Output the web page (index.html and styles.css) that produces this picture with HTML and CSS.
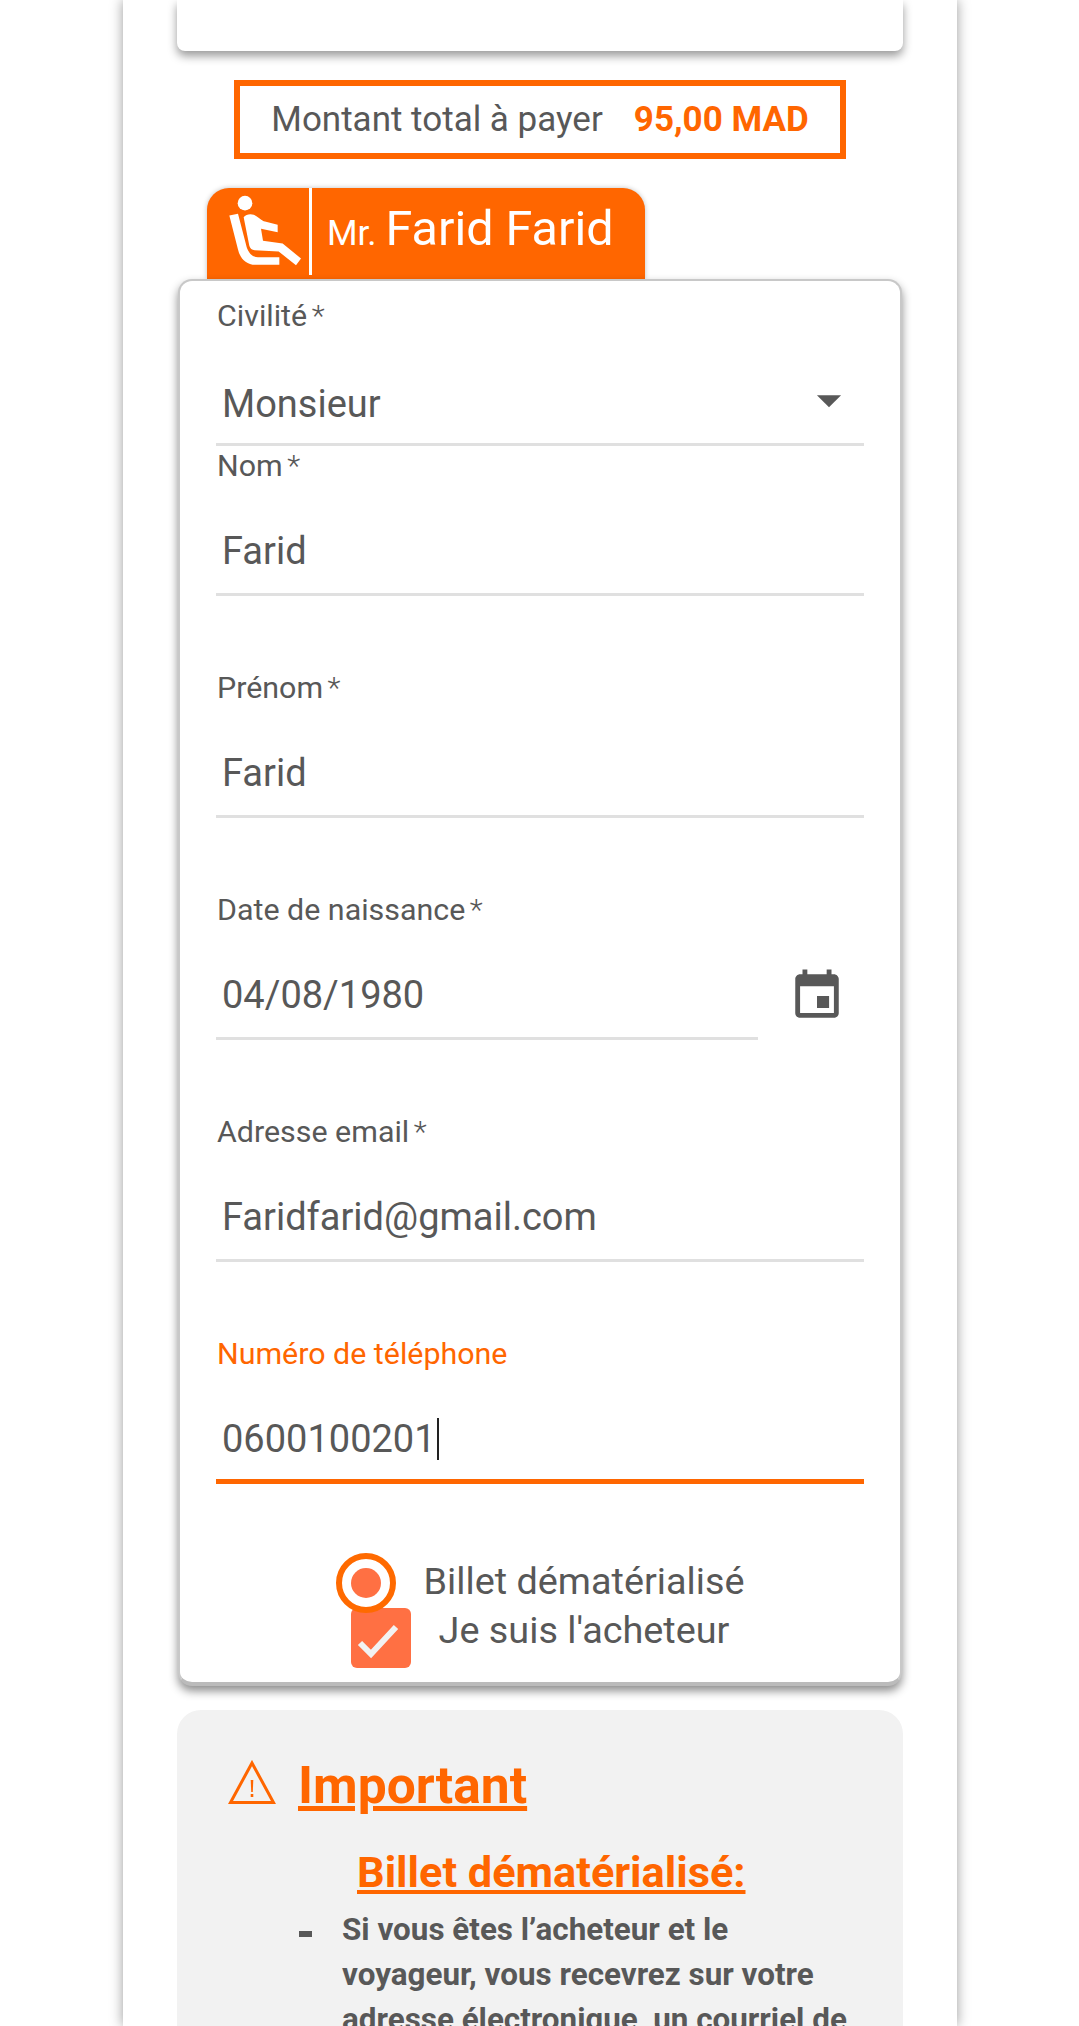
FILE: index.html
```html
<!DOCTYPE html>
<html lang="fr">
<head>
<meta charset="utf-8">
<title>Passager</title>
<link rel="stylesheet" href="styles.css">
</head>
<body>
<main class="panel">
  <div class="card-top"></div>
  <div class="total"><span class="total-label">Montant total à payer</span><strong class="total-amount">95,00 MAD</strong></div>
  <div class="tab">
    <span class="tab-icon">
      <svg class="seat" viewBox="110 70 240 230" aria-hidden="true"><circle cx="167" cy="100" r="22"/><path d="M120 137l26-5 24 92c4 18 14 38 36 38h64v23h-72c-28 0-46-20-52-46z"/><path d="M163 142c6-8 20-11 30-7 14 6 24 18 34 20l38 10v22l-50-10 6 36 59 8 55 45-15 20-52-41-72-4c-8 0-14-5-16-13z"/></svg>
    </span>
    <span class="tab-name"><small class="tab-title">Mr.</small> Farid Farid</span>
  </div>
  <form class="form-card">
    <div class="field field-first">
      <div class="label">Civilité <span class="req">*</span></div>
      <div class="input input-select"><span>Monsieur</span>
        <svg class="arrow" viewBox="0 0 24 24" aria-hidden="true"><path d="M7 10l5 5 5-5z"/></svg>
      </div>
    </div>
    <div class="field field-nom">
      <div class="label">Nom <span class="req">*</span></div>
      <div class="input"><span>Farid</span></div>
    </div>
    <div class="field">
      <div class="label">Prénom <span class="req">*</span></div>
      <div class="input"><span>Farid</span></div>
    </div>
    <div class="field field-date">
      <div class="date-main">
        <div class="label">Date de naissance <span class="req">*</span></div>
        <div class="input"><span>04/08/1980</span></div>
      </div>
      <svg class="calendar" viewBox="0 0 24 24" aria-hidden="true"><path d="M17 12h-5v5h5v-5zM16 1v2H8V1H6v2H5c-1.11 0-1.99.9-1.99 2L3 19c0 1.1.89 2 2 2h14c1.1 0 2-.9 2-2V5c0-1.1-.9-2-2-2h-1V1h-2zm3 18H5V8h14v11z"/></svg>
    </div>
    <div class="field">
      <div class="label">Adresse email <span class="req">*</span></div>
      <div class="input"><span>Faridfarid@gmail.com</span></div>
    </div>
    <div class="field field-active">
      <div class="label">Numéro de téléphone</div>
      <div class="input"><span>0600100201</span><i class="caret"></i></div>
    </div>
    <div class="option option-radio">
      <span class="radio"><span class="radio-dot"></span></span>
      <span class="option-text">Billet dématérialisé</span>
    </div>
    <div class="option option-check">
      <span class="checkbox">
        <svg class="check" viewBox="0 0 60 60" aria-hidden="true"><path d="M9 35l11 11 25-27"/></svg>
      </span>
      <span class="option-text">Je suis l'acheteur</span>
    </div>
  </form>
  <section class="notice">
    <h2 class="notice-title">
      <svg class="warn" viewBox="0 0 48 45" aria-hidden="true"><path class="warn-tri" d="M24 3L2.500 42.500h43z"/><path class="warn-bar" d="M22.700 20h2.600l-.5 12h-1.600z"/><rect class="warn-bar" x="22.700" y="34" width="2.600" height="3"/></svg>
      <span class="notice-word">Important</span>
    </h2>
    <h3 class="notice-sub">Billet dématérialisé:</h3>
    <ul class="notice-list">
      <li>Si vous êtes l’acheteur et le voyageur, vous recevrez sur votre adresse électronique, un courriel de</li>
    </ul>
  </section>
</main>
</body>
</html>
```
FILE: styles.css
```css
* { box-sizing: border-box; }
html, body { margin: 0; height: 2026px; overflow: hidden; background: #fff; }
body { font-family: Roboto, "Liberation Sans", sans-serif; color: #585858; }
.panel { width: 834px; margin-left: 123px; height: 2026px; padding: 0 54px; box-shadow: 0 0 12px rgba(0,0,0,.4); }
.card-top { height: 51px; background: #fff; border-radius: 0 0 8px 8px; box-shadow: 0 5px 10px rgba(0,0,0,.4); }
.total { width: 612px; height: 79px; margin: 29px auto 0; border: 6px solid #ff6600; padding-bottom: 1px; display: flex; align-items: center; justify-content: center; gap: 31px; font-size: 35px; }
.total-amount { color: #ff6600; font-weight: 700; }
.tab { margin: 29px 0 0 30px; width: 438px; height: 91px; background: #ff6600; border-radius: 22px 22px 0 0; display: flex; color: #fff; box-shadow: 0 0 5px rgba(0,0,0,.25); }
.tab-icon { width: 105px; height: 87px; border-right: 3px solid #fff; display: flex; align-items: center; padding-left: 19px; }
.seat { width: 80px; height: 77px; fill: #fff; }
.tab-name { padding: 11px 0 0 15px; font-size: 48.500px; line-height: 60px; white-space: nowrap; }
.tab-title { font-size: 35px; margin-right: -3px; }
.form-card { position: relative; margin: 0 1px; height: 1407px; padding: 16px 36px 0; background: #fff; border: 2px solid #c8c8c8; border-bottom: 4px solid #bbb; border-radius: 14px; box-shadow: 0 5px 10px rgba(0,0,0,.45); }
.field { margin-top: 73px; }
.field-first { margin-top: 0; }
.field-nom { margin-top: 1px; }
.label { height: 36px; line-height: 38px; font-size: 30.400px; padding-left: 1px; white-space: nowrap; }
.req { margin-left: -3px; font-weight: 300; }
.input { height: 113px; padding: 43px 0 17px 6px; border-bottom: 3px solid #e0e0e0; font-size: 38px; line-height: 50px; display: flex; align-items: center; }
.input-select { padding-top: 46px; padding-bottom: 14px; justify-content: space-between; }
.arrow { width: 58px; height: 58px; fill: #585858; margin-right: 6px; margin-top: -8px; }
.field-date { display: flex; align-items: flex-start; }
.date-main { width: 542px; }
.calendar { width: 58px; height: 58px; fill: #585858; margin: 76px 0 0 30px; }
.field-active .label { color: #ff6600; }
.field-active .input { border-bottom: 5px solid #ff6600; padding-bottom: 15px; }
.caret { width: 2px; height: 42px; margin-left: 1px; background: #222; }
.option { display: flex; justify-content: center; align-items: flex-start; gap: 28px; font-size: 37.800px; line-height: 50px; }
.option-radio { position: relative; z-index: 1; margin-top: 69px; }
.option-radio .option-text { padding-top: 3px; }
.option-check { margin-top: -5px; }
.option-check .option-text { margin-top: -3px; }
.radio { width: 60px; height: 60px; border: 6px solid #ff6a00; border-radius: 50%; display: flex; align-items: center; justify-content: center; flex: none; }
.radio-dot { width: 30px; height: 30px; background: #ff7043; border-radius: 50%; }
.checkbox { width: 60px; height: 60px; background: #ff7043; border-radius: 6px; flex: none; }
.check { display: block; width: 60px; height: 60px; fill: none; stroke: #f2f2f2; stroke-width: 6; }
.notice { margin-top: 24px; height: 600px; padding: 48px 30px 0 51px; background: #f2f2f2; border-radius: 24px; color: #ff6600; }
.notice-title { margin: 0; display: flex; align-items: center; gap: 22px; font-size: 51.500px; line-height: 56px; font-weight: 700; }
.warn { width: 48px; height: 45px; flex: none; margin-top: -8px; }
.warn-tri { fill: none; stroke: #ff6600; stroke-width: 3; }
.warn-bar { fill: #ff6600; }
.notice-word { text-decoration: underline; }
.notice-sub { margin: 34px 0 0; padding-left: 129px; font-size: 43.300px; line-height: 50px; font-weight: 700; text-decoration: underline; white-space: nowrap; }
.notice-list { margin: 9px 0 0; padding: 0 0 0 114px; list-style: none; color: #585858; font-size: 31.400px; line-height: 45px; font-weight: 700; }
.notice-list li { position: relative; max-width: 514px; }
.notice-list li::before { content: ""; position: absolute; left: -43px; top: 24px; width: 13px; height: 6px; background: #585858; }
```
